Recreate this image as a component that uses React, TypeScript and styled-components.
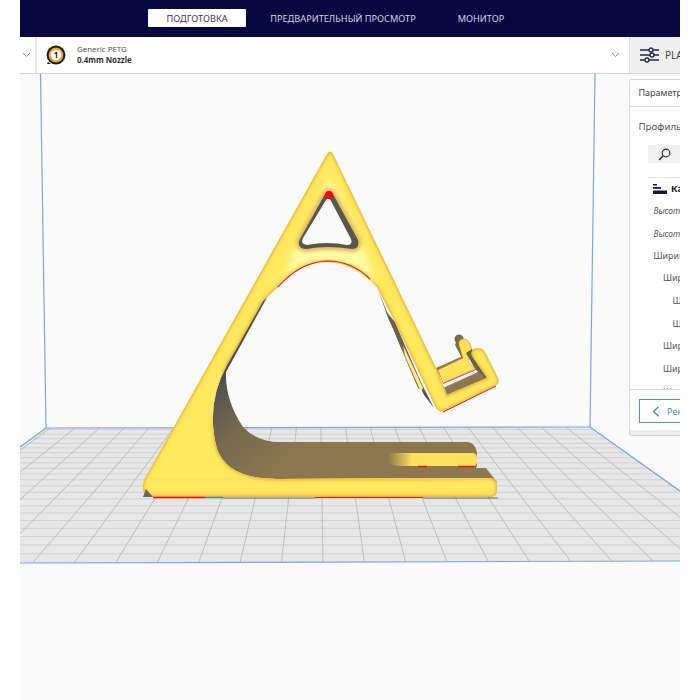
import React from "react";
import styled, { createGlobalStyle } from "styled-components";

const Global = createGlobalStyle`
  html, body { margin: 0; padding: 0; background: #fff; }
  body { font-family: "Noto Sans", "Open Sans", sans-serif; }
`;

const Window = styled.div`
  width: 660px;
  height: 700px;
  margin: 0 20px;
  display: flex;
  flex-direction: column;
  overflow: hidden;
  background: #fafafa;
`;

const Header = styled.header`
  height: 37px;
  flex: none;
  box-sizing: border-box;
  background: #08073f;
  display: flex;
  align-items: flex-start;
  padding: 9px 0 0 128px;
`;

const Tab = styled.div<{ $active?: boolean; $width: number }>`
  width: ${(p) => p.$width}px;
  height: 18px;
  display: flex;
  align-items: center;
  justify-content: center;
  font-size: 9.2px;
  white-space: nowrap;
  border-radius: 1px;
  color: ${(p) => (p.$active ? "#3a3a4a" : "#d4d4e0")};
  background: ${(p) => (p.$active ? "#fff" : "transparent")};
`;

const Toolbar = styled.div`
  height: 37px;
  flex: none;
  box-sizing: border-box;
  background: #fff;
  border-bottom: 1px solid #d4d4d4;
  display: flex;
  align-items: stretch;
`;

const Collapsed = styled.div`
  width: 17px;
  flex: none;
  display: flex;
  align-items: center;
  justify-content: center;
  border-right: 2px solid #e8e8e8;
  padding-right: 3px;
  box-sizing: border-box;
`;

const ExtruderCell = styled.div`
  flex: 1;
  display: flex;
  align-items: center;
  padding: 0 9px;
`;

const ExtruderText = styled.div`
  margin-left: 11px;
  flex: 1;
  display: flex;
  flex-direction: column;
  font-size: 7.9px;
  line-height: 11px;
  color: #555;
`;

const NozzleName = styled.span`
  font-weight: 700;
  color: #333;
`;

const ProfileCell = styled.div`
  width: 51px;
  flex: none;
  box-sizing: border-box;
  background: #efefef;
  border-left: 1px solid #dedede;
  display: flex;
  align-items: center;
  padding-left: 10px;
  gap: 6px;
  font-size: 10px;
  color: #444;
  white-space: nowrap;
`;

const Viewport = styled.main`
  position: relative;
  flex: 1;
  overflow: hidden;
`;

const Scene = styled.div`
  position: absolute;
  left: 0;
  top: 0;
`;

const SettingsPanel = styled.aside`
  position: absolute;
  left: 609px;
  top: 5px;
  width: 300px;
  height: 357px;
  box-sizing: border-box;
  background: #fff;
  border: 1px solid #d6d6d6;
  border-radius: 2px 0 0 2px;
  display: flex;
  flex-direction: column;
  color: #555;
  font-size: 9.5px;
`;

const PanelTitle = styled.div`
  height: 27px;
  flex: none;
  box-sizing: border-box;
  border-bottom: 1px solid #dcdcdc;
  padding: 0 0 2px 8.5px;
  display: flex;
  align-items: center;
  font-size: 9px;
  color: #444;
`;

const ProfileLabel = styled.div`
  padding: 13px 0 0 8.5px;
  line-height: 14px;
  font-size: 9.7px;
`;

const SearchRow = styled.div`
  margin: 11px 0 0 18px;
  height: 18px;
  background: #f0f0f0;
  display: flex;
  align-items: center;
  padding-left: 10px;
  flex: none;
`;

const SettingsList = styled.div`
  margin: 14px 0 0 18px;
  flex: 1;
  min-height: 0;
  overflow: hidden;
  border-top: 1px solid #e2e2e2;
`;

const CategoryRow = styled.div`
  height: 21px;
  display: flex;
  align-items: center;
  padding-left: 5px;
  gap: 4px;
  font-weight: 700;
  font-size: 9.5px;
  color: #222;
`;

const SettingRow = styled.div<{ $depth: number; $italic?: boolean }>`
  height: 22.7px;
  display: flex;
  align-items: center;
  white-space: nowrap;
  padding-left: ${(p) => 5.5 + p.$depth * 9.5}px;
  font-style: ${(p) => (p.$italic ? "italic" : "normal")};
  font-size: ${(p) => (p.$italic ? "8.4px" : "8.8px")};
`;

const PanelFooter = styled.div`
  height: 41px;
  flex: none;
  box-sizing: border-box;
  border-top: 1px solid #dcdcdc;
  padding: 9px 0 0 9px;
  background: #fff;
`;

const RecommendedButton = styled.div`
  height: 24px;
  box-sizing: border-box;
  border: 1px solid #4a8cf0;
  display: flex;
  align-items: center;
  padding-left: 12px;
  gap: 7px;
  color: #3d86f2;
  font-size: 9.2px;
`;

const PanelEdge = styled.div`
  height: 5px;
  flex: none;
  background: #ececec;
`;

const Chevron = () => (
  <svg width="9" height="6" viewBox="0 0 9 6">
    <path d="M1 1 L4.5 4.5 L8 1" fill="none" stroke="#9a9a9a" strokeWidth="1" />
  </svg>
);

const NozzleBadge = () => (
  <svg width="20" height="20" viewBox="0 0 20 20" style={{ flex: "none" }}>
    <circle cx="10" cy="10" r="9.4" fill="#1a1a1a" />
    <path d="M2 17 L1 19 L5 19 Z" fill="#1a1a1a" />
    <circle cx="10" cy="10" r="7.4" fill="#f2a51f" />
    <circle cx="10" cy="10" r="5.3" fill="#fff" />
    <text x="10" y="13" textAnchor="middle" fontSize="8" fontWeight="700" fontFamily="Noto Sans" fill="#111">1</text>
  </svg>
);

const SlidersIcon = () => (
  <svg width="19" height="16" viewBox="0 0 19 16" style={{ flex: "none" }}>
    <g stroke="#23234f" strokeWidth="1.3" fill="#efefef">
      <path d="M0 3 H19 M0 8 H19 M0 13 H19" />
      <circle cx="11" cy="3" r="2" />
      <circle cx="12" cy="8" r="2" />
      <circle cx="7" cy="13" r="2" />
    </g>
  </svg>
);

const SearchGlyph = () => (
  <svg width="13" height="13" viewBox="0 0 13 13">
    <circle cx="8" cy="5" r="3.8" fill="none" stroke="#333" strokeWidth="1.2" />
    <path d="M5.2 7.8 L1 12" stroke="#333" strokeWidth="1.6" />
  </svg>
);

const LayersGlyph = () => (
  <svg width="14" height="10" viewBox="0 0 14 10" style={{ flex: "none" }}>
    <path d="M0 0 H4 V1.6 H0 Z M0 3 H8 V4.8 H0 Z M0 6.4 H14 V10 H0 Z" fill="#16163c" />
  </svg>
);

const BackGlyph = () => (
  <svg width="8" height="11" viewBox="0 0 8 11" style={{ flex: "none" }}>
    <path d="M6.5 0.8 L1.5 5.5 L6.5 10.2" fill="none" stroke="#3d86f2" strokeWidth="1.4" />
  </svg>
);

/* Perspective grid of the build plate: verticals converge on x = 318. */
const verticals = Array.from({ length: 28 }, (_, i) => i - 13 + 0.12);
const horizontals: number[] = (() => {
  const out: number[] = [];
  let y = 563;
  let step = 9.2;
  while (y > 428) {
    y -= step;
    step = Math.max(4.6, step * 0.96);
    if (y > 428) out.push(y);
  }
  return out;
})();

const BODY =
  "M327 154 Q330 149 333 154 L413 320 L438 372 L447 395 L487 378 L472 356 Q470 349 477 348 Q483 347 486 354 " +
  "L498 378 Q500 384 495 386 L445 411 Q438 413 435 406 L395 322 L377 287 Q352 262 327 262 Q300 262 278 287 " +
  "L263 301 L227 365 Q205 405 217 449 Q228 479 277 479 L488 478 Q497 478 497 486 L497 491 Q497 497 490 497 " +
  "L155 497 Q139 497 144 480 Z";
const HOLE_OUTER = "M325 194 Q329 188 333 194 L358 240 Q360 249 352 249 Q327 245 306 249 Q296 248 300 239 Z";
const HOLE_INNER = "M326 200 Q329 197 331 201 L351 239 Q353 245 347 245 Q327 241 307 245 Q300 244 303 238 Z";

const ModelShading = () => (
  <>
    <defs>
      <clipPath id="plate">
        <path d="M46 428 L590 427 L680 491 L680 561 L20 563 L20 447 Z" />
      </clipPath>
      <clipPath id="body">
        <path d={BODY} />
      </clipPath>
      <filter id="soft2" x="-20%" y="-20%" width="140%" height="140%">
        <feGaussianBlur stdDeviation="2" />
      </filter>
      <filter id="soft1" x="-20%" y="-20%" width="140%" height="140%">
        <feGaussianBlur stdDeviation="0.8" />
      </filter>
      <filter id="soft4" x="-20%" y="-20%" width="140%" height="140%">
        <feGaussianBlur stdDeviation="3.5" />
      </filter>
      <linearGradient id="inner" gradientUnits="userSpaceOnUse" x1="222" y1="375" x2="295" y2="455">
        <stop offset="0" stopColor="#4f4f50" />
        <stop offset="0.45" stopColor="#756850" />
        <stop offset="1" stopColor="#8c7750" />
      </linearGradient>
      <linearGradient id="fade" x1="0" y1="0" x2="1" y2="0">
        <stop offset="0" stopColor="#8c7750" />
        <stop offset="0.28" stopColor="#ffe25c" />
        <stop offset="1" stopColor="#ffe25c" />
      </linearGradient>
      <linearGradient id="barFace" x1="0" y1="0" x2="0" y2="1">
        <stop offset="0" stopColor="#ffe35c" />
        <stop offset="0.45" stopColor="#ffeb60" />
        <stop offset="1" stopColor="#ffd94e" />
      </linearGradient>
    </defs>

    {/* Underside and inner walls of the stand */}
    <path
      d="M270 292 L226 372 Q225 400 243 427 Q257 442 280 442 L468 442 Q474 442 477 452 L477 466 L486 468 L497 482 L497 492 L230 490 L205 440 L215 370 L258 296 Z"
      fill="url(#inner)"
    />
    <path d="M377 287 L389 320 L434 408 L424 395 L400 345 Z" fill="#55524c" />
    <path d="M385 310 L395 322 L425 392 L418 388 Z" fill="#6a6250" />
    <path d="M403 345 L423 388 L421 392 L405 356 Z" fill="#ffe98a" />

    {/* Rear hook behind the arm */}
    <path d="M436 368 L463 356 L468 364 L438 378 Z" fill="#8c7750" />
    <path d="M459 336 L455 345 L462 358 L470 352 Z" fill="#7a6a48" />
    <circle cx="459" cy="339" r="4.5" fill="#7a6a48" />
    <path d="M443 388 L478 372 L487 378 L447 395 Z" fill="#8c7750" />
    <path d="M438 370 L463 358 L459 345 Q458 339 464 339 Q468 339 470 344 L472 350 L468 361 L475 369 L443 383 Z" fill="#ffe25c" stroke="#c79c48" strokeWidth="0.7" />
    <path d="M443 385 L476 371" stroke="#fafafa" strokeWidth="1.3" />
    <path d="M443 383.6 L477 369" stroke="#ee1c1c" strokeWidth="0.8" />
    <path d="M472 349 L466 353 L474 367 L478 372 L487 379 L481 360 Z" fill="#6d6242" />

    {/* Front faces */}
    <path d={BODY} fill="#ffe95e" />
    <g clipPath="url(#body)">
      <path d="M330 178 L368 258 L376 285 L330 270 L282 288 L292 255 Z" fill="#fffca6" filter="url(#soft4)" />
      <rect x="150" y="478" width="350" height="19" fill="url(#barFace)" />
      <path d={BODY} fill="none" stroke="#ffd84c" strokeWidth="4" filter="url(#soft2)" />
      <path d={BODY} fill="none" stroke="#d9a648" strokeWidth="1.8" filter="url(#soft1)" />
      <path d="M372 286 Q350 266 327 266 Q302 266 282 286" fill="none" stroke="#fff79c" strokeWidth="6" filter="url(#soft2)" />
      <path d="M222 372 Q205 405 219 447 Q232 477 277 477 L488 477" fill="none" stroke="#fff38c" strokeWidth="2.5" filter="url(#soft1)" />
      <path d="M150 495.5 H495" stroke="#eab040" strokeWidth="2.4" filter="url(#soft1)" />
    </g>

    {/* Triangular cut-out */}
    <path d={HOLE_OUTER} fill="none" stroke="#d9ac50" strokeWidth="5" filter="url(#soft2)" />
    <path d={HOLE_OUTER} fill="#5a564e" />
    <path d={HOLE_INNER} fill="#fafafa" />
    <circle cx="329" cy="195" r="4" fill="#f50808" />

    {/* Clearance slot and front prong of the base */}
    <path d="M388 453 H472 Q477 453 477 458 V462 Q477 466 472 466 H400 Q388 466 388 460 Z" fill="url(#fade)" />
    <path d="M398 457 H476" stroke="#fff08c" strokeWidth="2" filter="url(#soft1)" />
    <path d="M477 466 L488 468 L476 468 Z" fill="#ececec" />

    {/* Overhang marks along the bed contact */}
    <path d="M153 497.5 H205" stroke="#ee1212" strokeWidth="1.6" />
    <path d="M205 497.5 H223" stroke="#3d8f8f" strokeWidth="1.4" />
    <path d="M223 498 H315" stroke="#6a6a6a" strokeWidth="1.2" />
    <path d="M315 497.5 H423" stroke="#ee1212" strokeWidth="1.2" />
    <path d="M423 498 H498" stroke="#6a6a6a" strokeWidth="1.2" />
    <path d="M418 466.5 H427 M458 466.5 H474" stroke="#ee1212" strokeWidth="1.4" />
    <path d="M443 412 L496 386" stroke="#ee1212" strokeWidth="1" />
    <path d="M278 287 Q300 262 327 261 Q352 261 370 279" fill="none" stroke="#f01010" strokeWidth="1.1" />
    <path d="M143 497 L146 489 L153 497 Z" fill="#666" />
  </>
);

const BuildVolume = () => (
  <svg width="660" height="626" viewBox="20 74 660 626" style={{ display: "block" }}>
    <path d="M46 428 L590 427 L680 491 L680 561 L20 563 L20 447 Z" fill="#e7e7e7" />
    <g clipPath="url(#plate)">
      {horizontals.map((y) => (
        <path key={y} d={`M0 ${y} H700`} stroke="#d2d2d2" strokeWidth="1" />
      ))}
      {verticals.map((k) => (
        <path
          key={k}
          d={`M${318 + 24.6 * k} 428 L${318 + 41.5 * k} 563`}
          stroke="#bdbdbd"
          strokeWidth="1"
        />
      ))}
    </g>
    <g fill="none" stroke="#74a5f0" strokeWidth="1.2">
      <path d="M40.5 74 L46 428 L20 447" />
      <path d="M595 74 L590 427 L680 491" />
      <path d="M46 428 L590 427" />
      <path d="M20 563 L680 561" />
    </g>
    <ModelShading />
  </svg>
);

const rows: { label: string; depth: number; italic?: boolean }[] = [
  { label: "Высота слоя", depth: 0, italic: true },
  { label: "Высота первого слоя", depth: 0, italic: true },
  { label: "Ширина линии", depth: 0 },
  { label: "Ширина линии стенки", depth: 1 },
  { label: "Ширина внешней стенки", depth: 2 },
  { label: "Ширина внутренней стенки", depth: 2 },
  { label: "Ширина линии дна", depth: 1 },
  { label: "Ширина линии заполнения", depth: 1 },
  { label: "Ширина линии поддержки", depth: 1 },
];

export default function App() {
  return (
    <>
      <Global />
      <Window>
        <Header>
          <Tab $active $width={98}>ПОДГОТОВКА</Tab>
          <Tab $width={194}>ПРЕДВАРИТЕЛЬНЫЙ ПРОСМОТР</Tab>
          <Tab $width={82}>МОНИТОР</Tab>
        </Header>
        <Toolbar>
          <Collapsed>
            <Chevron />
          </Collapsed>
          <ExtruderCell>
            <NozzleBadge />
            <ExtruderText>
              <span>Generic PETG</span>
              <NozzleName>0.4mm Nozzle</NozzleName>
            </ExtruderText>
            <Chevron />
          </ExtruderCell>
          <ProfileCell>
            <SlidersIcon />
            PLA
          </ProfileCell>
        </Toolbar>
        <Viewport>
          <Scene>
            <BuildVolume />
          </Scene>
          <SettingsPanel>
            <PanelTitle>Параметры печати</PanelTitle>
            <ProfileLabel>Профиль</ProfileLabel>
            <SearchRow>
              <SearchGlyph />
            </SearchRow>
            <SettingsList>
              <CategoryRow>
                <LayersGlyph />
                Качество
              </CategoryRow>
              {rows.map((r) => (
                <SettingRow key={r.label} $depth={r.depth} $italic={r.italic}>
                  {r.label}
                </SettingRow>
              ))}
            </SettingsList>
            <PanelFooter>
              <RecommendedButton>
                <BackGlyph />
                Рекомендованный
              </RecommendedButton>
            </PanelFooter>
            <PanelEdge />
          </SettingsPanel>
        </Viewport>
      </Window>
    </>
  );
}
